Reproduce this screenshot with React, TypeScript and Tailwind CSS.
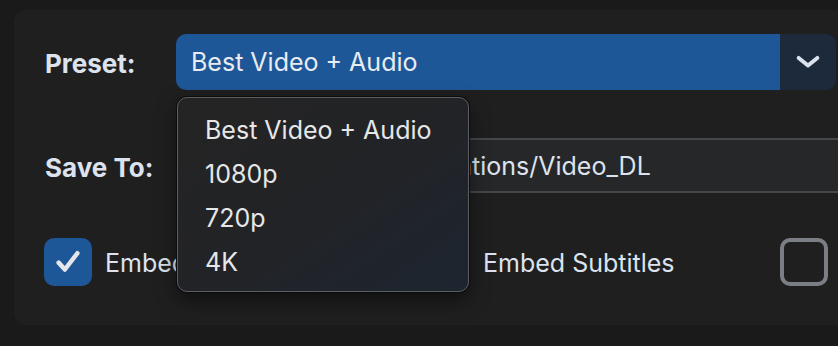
import React from 'react';

const presets = ['Best Video + Audio', '1080p', '720p', '4K'];

const CheckBox: React.FC<{ checked: boolean }> = ({ checked }) =>
    checked ? (
        <div className="w-[48px] h-[48px] rounded-[10px] bg-[#1e5797] flex items-center justify-center shrink-0">
            <svg width="30" height="30" viewBox="0 0 24 24" fill="none">
                <path d="M4.5 12.5l5 5.5L19.5 5" stroke="#e4e6ea" strokeWidth="3.6" strokeLinecap="round" strokeLinejoin="round" />
            </svg>
        </div>
    ) : (
        <div className="w-[48px] h-[48px] rounded-[10px] border-[4px] border-[#7b7f85] shrink-0" />
    );

const App: React.FC = () => {
    return (
        <div className="w-[838px] h-[346px] overflow-hidden bg-[#1a1a1a] pt-[10px] pl-[14px] font-['Inter',sans-serif]">
            <div className="relative w-[1000px] h-[315px] rounded-[12px] bg-[#1f1f1f] pt-[24px] pl-[30px]">
                {/* Preset */}
                <div className="flex items-center h-[56px]">
                    <span className="w-[132px] shrink-0 pt-[3px] text-[26px] font-bold text-[#dce3ee] pl-[1px]">Preset:</span>
                    <div className="flex w-[660px] shrink-0 h-[56px] rounded-[10px] overflow-hidden">
                        <div className="flex-1 bg-[#1e5797] flex items-center pl-[15px] pt-[2px] text-[25px] text-[#e8ecf2]">
                            Best Video + Audio
                        </div>
                        <div className="w-[56px] bg-[#1c2a3b] flex items-center justify-center">
                            <svg width="28" height="28" viewBox="0 0 24 24" fill="none">
                                <path d="M4 8.5l8 6.5 8-6.5" stroke="#dce3ee" strokeWidth="3.4" strokeLinecap="round" strokeLinejoin="round" />
                            </svg>
                        </div>
                    </div>
                </div>

                {/* Save To */}
                <div className="flex items-center h-[55px] mt-[48px]">
                    <span className="w-[132px] shrink-0 pt-[3px] text-[26px] font-bold text-[#dce3ee] pl-[1px]">Save To:</span>
                    <div className="w-[720px] shrink-0 h-[55px] bg-[#262729] border-y-[2px] border-[#44484c] flex items-center pl-[40px] pt-[2px] text-[25px] text-[#dce3ee] whitespace-nowrap">
                        /Users/admin/Applications/Video_DL
                    </div>
                </div>

                {/* Options */}
                <div className="flex items-center h-[48px] mt-[45px]">
                    <div className="w-[377px] shrink-0 flex items-center gap-[13px]">
                        <CheckBox checked />
                        <span className="pt-[4px] text-[25px] text-[#dce3ee] whitespace-nowrap">Embed Metadata</span>
                    </div>
                    <div className="w-[359px] shrink-0 flex items-center gap-[14px]">
                        <CheckBox checked />
                        <span className="pt-[4px] text-[25px] text-[#dce3ee] whitespace-nowrap">Embed Subtitles</span>
                    </div>
                    <div className="shrink-0 flex items-center gap-[14px]">
                        <CheckBox checked={false} />
                        <span className="pt-[4px] text-[25px] text-[#dce3ee] whitespace-nowrap">Embed Thumbnail</span>
                    </div>
                </div>

                {/* Dropdown menu */}
                <div className="absolute left-[163px] top-[87px] w-[292px] h-[195px] rounded-[10px] border border-[#5b5e62] bg-gradient-to-br from-[#242424] via-[#222326] to-[#1d2530] shadow-[0_0_0_1px_#0c0c0c,0_8px_20px_rgba(0,0,0,0.5)] pt-[10px]">
                    {presets.map((p) => (
                        <div key={p} className="h-[44px] flex items-center pl-[27px] pt-[2px] text-[25px] text-[#e6e7e9]">
                            {p}
                        </div>
                    ))}
                </div>
            </div>
        </div>
    );
};

export default App;
